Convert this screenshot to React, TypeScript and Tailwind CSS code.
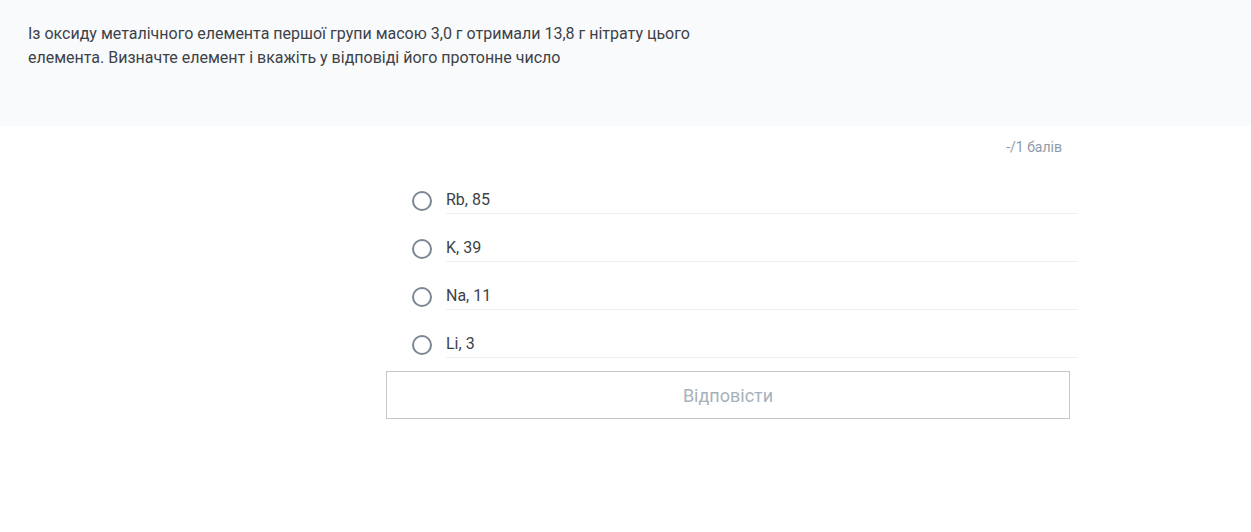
const options = ['Rb, 85', 'K, 39', 'Na, 11', 'Li, 3'];

function Radio() {
  return (
    <span className="w-5 h-5 shrink-0 self-center rounded-full border-2 border-[#7b8794] bg-white" />
  );
}

export default function App() {
  return (
    <div className="min-h-[532px] bg-white text-[#333] font-['Roboto',sans-serif]">
      <div className="h-[126px] bg-[#f9fafc] pt-[22px] px-7">
        <p className="max-w-[700px] text-[16px] leading-6 text-[#3d4248]">
          Із оксиду металічного елемента першої групи масою 3,0 г отримали 13,8 г нітрату цього
          елемента. Визначте елемент і вкажіть у відповіді його протонне число
        </p>
      </div>

      <div className="ml-[386px] w-[684px]">
        <div className="mt-[11px] flex justify-end pr-2">
          <span className="text-[14px] leading-5 text-[#8d9aa6]">-/1 балів</span>
        </div>

        <div className="mt-[9px] ml-[26px] w-[666px]">
          {options.map(opt => (
            <label key={opt} className="flex gap-[14px] pt-[22px] cursor-pointer">
              <Radio />
              <span className="flex-1 border-b border-[#eef0f2] pb-[1px] text-[16px] leading-6 text-[#3d4248]">
                {opt}
              </span>
            </label>
          ))}
        </div>

        <button
          type="button"
          className="mt-[13px] w-full h-12 border border-[#c3c8cc] bg-white text-[18px] text-[#a7b1ba]"
        >
          Відповісти
        </button>
      </div>
    </div>
  );
}
